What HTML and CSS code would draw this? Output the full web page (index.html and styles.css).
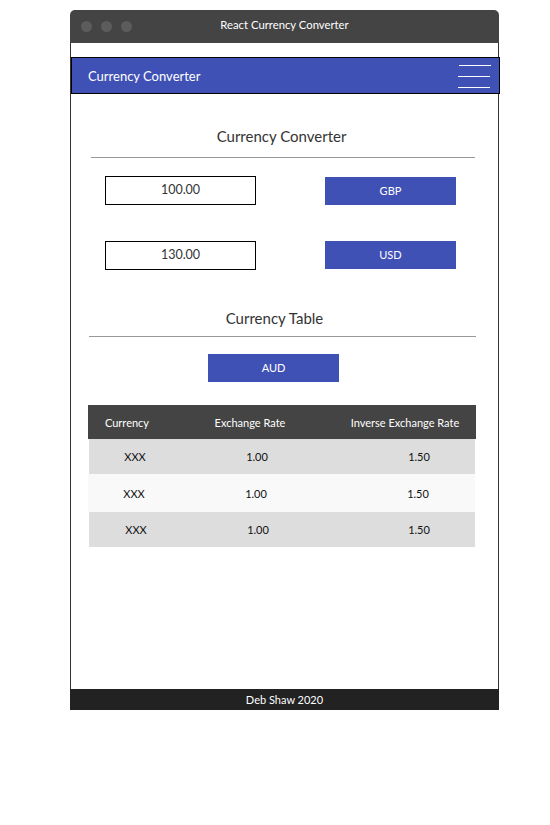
FILE: index.html
```html
<!DOCTYPE html>
<html>
<head>
<meta charset="utf-8">
<link rel="stylesheet" href="styles.css">
</head>
<body>
<div class="page">
  <div class="window">
    <div class="titlebar">
      <div class="dots"><span class="dot"></span><span class="dot"></span><span class="dot"></span></div>
      <div class="title">React Currency Converter</div>
    </div>
    <div class="body">
      <div class="navbar">
        <span class="brand">Currency Converter</span>
        <div class="burger"><span class="l1"></span><span class="l2"></span><span class="l3"></span></div>
      </div>
      <h2 class="h-conv">Currency Converter</h2>
      <div class="rule r1"></div>
      <div class="row row1">
        <div class="input">100.00</div>
        <div class="btn">GBP</div>
      </div>
      <div class="row row2">
        <div class="input">130.00</div>
        <div class="btn">USD</div>
      </div>
      <h2 class="h-table">Currency Table</h2>
      <div class="rule r2"></div>
      <div class="aud-wrap"><div class="btn aud">AUD</div></div>
      <div class="table">
        <div class="thead">
          <span class="c1">Currency</span><span class="c2">Exchange Rate</span><span class="c3">Inverse Exchange Rate</span>
        </div>
        <div class="tr dark"><span class="d1">XXX</span><span class="d2">1.00</span><span class="d3">1.50</span></div>
        <div class="tr light"><span class="d1">XXX</span><span class="d2">1.00</span><span class="d3">1.50</span></div>
        <div class="tr dark last"><span class="d1">XXX</span><span class="d2">1.00</span><span class="d3">1.50</span></div>
      </div>
      <div class="spacer"></div>
      <div class="footer">Deb Shaw 2020</div>
    </div>
  </div>
</div>
</body>
</html>
```

FILE: styles.css
```css
* { box-sizing: border-box; margin: 0; padding: 0; }
body { margin: 0; background: #fff; font-family: "Lato", "Open Sans", sans-serif; color: #333; }
.page { padding: 10px 0 0 70px; width: 550px; height: 825px; }
.window { width: 429px; display: flex; flex-direction: column; }
.titlebar { height: 33px; background: #444; border-radius: 5px 5px 0 0; display: flex; align-items: center; position: relative; }
.dots { display: flex; gap: 9px; padding-left: 11px; }
.dot { width: 11px; height: 11px; border-radius: 50%; background: #5c5c5c; }
.title { position: absolute; left: 0; right: 0; text-align: center; color: #fff; font-size: 11.3px; top: 8px; }
.body { border-left: 1px solid #333; border-right: 1px solid #333; height: 667px; display: flex; flex-direction: column; }
.navbar { margin-top: 14px; margin-right: -2px; height: 37px; background: #3f51b5; border: 1px solid #000; display: flex; align-items: center; justify-content: space-between; padding: 0 8px 0 16px; }
.brand { color: #fff; font-size: 13px; }
.burger { width: 33px; height: 24px; display: flex; flex-direction: column; justify-content: space-between; align-items: flex-end; padding-top: 1px; }
.burger span { display: block; height: 1px; background: #fff; width: 32px; }
.burger .l2 { margin-right: 1px; }
.burger .l3 { margin-right: 1px; }
h2 { font-weight: normal; font-size: 15px; color: #333; text-align: center; }
.h-conv { margin-top: 32px; line-height: 20px; padding-right: 6px; }
.rule { height: 1px; background: #999; }
.r1 { margin: 11px 23px 0 20px; }
.row { display: flex; justify-content: space-between; padding: 0 42px 0 34px; }
.row1 { margin-top: 18px; }
.row2 { margin-top: 36px; }
.input { width: 151px; height: 29px; border: 1px solid #000; text-align: center; font-size: 12.5px; line-height: 26px; }
.btn { width: 131px; height: 28px; background: #3f51b5; color: #fff; font-size: 11px; text-align: center; line-height: 28px; }
.row1 .btn { margin-top: 1px; }
.row2 .btn { margin-top: 0; }
.h-table { margin-top: 38px; line-height: 20px; padding-right: 20px; }
.r2 { margin: 8px 22px 0 18px; }
.aud-wrap { display: flex; padding-left: 137px; margin-top: 17px; }
.table { margin: 23px 22px 0 17px; }
.thead { height: 34px; background: #444; color: #fff; font-size: 11px; display: grid; grid-template-columns: 78px 168px 142px; align-items: center; }
.thead .c1 { text-align: center; }
.thead .c2 { text-align: center; }
.thead .c3 { text-align: center; }
.tr { display: grid; grid-template-columns: 92px 156px 140px; align-items: center; font-size: 11px; color: #111; margin: 0 1px; }
.tr span { text-align: center; }
.tr .d2 { padding-right: 4px; }
.tr .d3 { padding-left: 24px; }
.dark { background: #ddd; height: 35px; }
.light { background: #f9f9f9; height: 38px; margin-left: 0; }
.last .d1 { padding-left: 2px; }
.last .d2 { padding-right: 2px; }
.spacer { flex: 1; }
.footer { height: 21px; background: #222; color: #fff; font-size: 11px; text-align: center; line-height: 21px; margin: 0 -1px; }
```
